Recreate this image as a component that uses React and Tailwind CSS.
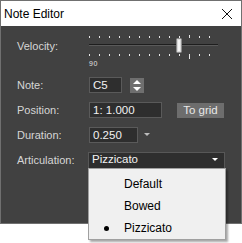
import React from 'react';

const font = { fontFamily: '"Liberation Sans", Arial, sans-serif' };

// longer tick marks the current default position
const isLong = (x) => x === 100.5;

const VelocitySlider = () => {
    const ticks = [];
    for (let n = 0; n < 13; n++) ticks.push(n * 10 + 0.5);

    return (
        <div className="flex flex-col">
            <svg width="132" height="24" className="block">
                {ticks.map((x) => (
                    <line key={'t' + x} x1={x} x2={x} y1={isLong(x) ? 0 : 1} y2="3" stroke="#e6e6e6" strokeWidth="1" />
                ))}
                <rect x="0" y="9" width="129" height="1" fill="#1e1e1e" />
                <rect x="0" y="10" width="129" height="1" fill="#5a5a5a" />
                <rect x="87.5" y="3.5" width="5" height="14" rx="1" fill="#d8d8d8" stroke="#8a8a8a" />
                <rect x="89" y="5" width="2" height="11" fill="#f4f4f4" />
                {ticks.map((x) => (
                    <line key={'b' + x} x1={x} x2={x} y1="19" y2={isLong(x) ? 24 : 21} stroke="#e6e6e6" strokeWidth="1" />
                ))}
            </svg>
            <span className="text-[7px] leading-[8px] text-[#e0e0e0] mt-[1px] tracking-[0.5px]">90</span>
        </div>
    );
};

const Row = ({ label, children }) => (
    <div className="flex items-center h-[16px] mt-[9px]">
        <span className="w-[72px] text-[11px] text-[#d6d6d6]">{label}</span>
        {children}
    </div>
);

const Field = ({ value, width }) => (
    <div className={`${width} h-[16px] bg-[#2e2e2e] border border-[#5a5a5a] text-[11.5px] leading-[14px] text-[#f2f2f2] pl-[3px]`}>
        {value}
    </div>
);

const App = () => {
    return (
        <div className="w-[242px] h-[243px] bg-white relative overflow-hidden" style={font}>
            <div className="w-[242px] h-[224px] border border-[#707070] flex flex-col">
                {/* Title bar */}
                <div className="h-[25px] bg-white flex items-center justify-between pl-[3px] pr-[8px]">
                    <span className="text-[12px] text-black">Note Editor</span>
                    <svg width="12" height="12" viewBox="0 0 12 12">
                        <path d="M1 1 L11 11 M11 1 L1 11" stroke="#111" strokeWidth="1" />
                    </svg>
                </div>

                <div className="flex-1 bg-[#414141] pl-[16px] pt-[9px]">
                    {/* Velocity */}
                    <div className="flex">
                        <span className="w-[72px] text-[11px] text-[#d6d6d6] mt-[3px]">Velocity:</span>
                        <VelocitySlider />
                    </div>

                    <div className="mt-[4px]">
                        <Row label="Note:">
                            <Field value="C5" width="w-[33px]" />
                            <div className="ml-[8px] w-[14px] h-[15px] bg-[#6f6f6f] flex items-center justify-center">
                                <svg width="8" height="11" viewBox="0 0 8 11">
                                    <path d="M4 0 L8 4 L0 4 Z" fill="#ffffff" />
                                    <path d="M0 7 L8 7 L4 11 Z" fill="#ffffff" />
                                </svg>
                            </div>
                        </Row>
                        <Row label="Position:">
                            <Field value="1: 1.000" width="w-[73px]" />
                            <button className="ml-[15px] w-[47px] h-[15px] bg-[#6d6d6d] text-[11.5px] leading-[14px] text-[#e8e8e8]">
                                To grid
                            </button>
                        </Row>
                        <Row label="Duration:">
                            <Field value="0.250" width="w-[49px]" />
                            <svg width="6" height="4" viewBox="0 0 6 4" className="ml-[6px]">
                                <path d="M0 0 L6 0 L3 3 Z" fill="#bdbdbd" />
                            </svg>
                        </Row>
                        <Row label="Articulation:">
                            <div className="-ml-[1px] w-[137px] h-[17px] bg-[#2e2e2e] border border-[#575757] flex items-center justify-between pl-[3px] pr-[6px]">
                                <span className="text-[11.5px] text-[#f2f2f2]">Pizzicato</span>
                                <svg width="6" height="4" viewBox="0 0 6 4">
                                    <path d="M0 0 L6 0 L3 3 Z" fill="#ffffff" />
                                </svg>
                            </div>
                        </Row>
                    </div>
                </div>
            </div>

            {/* Open articulation menu */}
            <div className="absolute left-[88px] top-[168px] w-[138px] h-[72px] bg-[#f0f0f0] border border-[#a0a0a0] shadow-[2px_2px_2px_rgba(0,0,0,0.35)] flex flex-col pt-[4px]">
                {['Default', 'Bowed', 'Pizzicato'].map((item) => (
                    <div key={item} className="flex items-center h-[22px]">
                        <span className="w-[35px] flex justify-center">
                            {item === 'Pizzicato' && <span className="w-[5px] h-[5px] rounded-full bg-black" />}
                        </span>
                        <span className="text-[12px] text-black">{item}</span>
                    </div>
                ))}
            </div>
        </div>
    );
};

export default App;
